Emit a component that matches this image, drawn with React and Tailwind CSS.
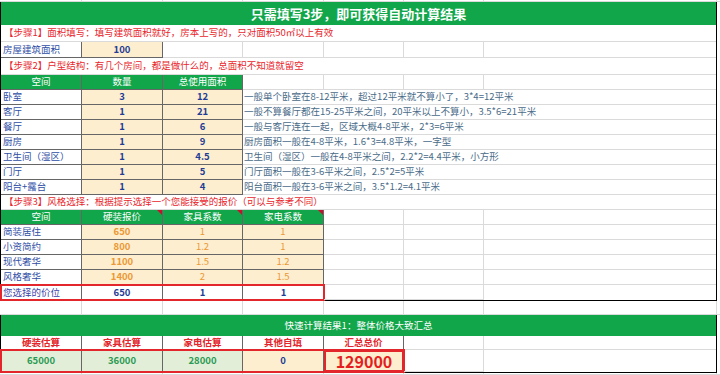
const FONT = { fontFamily: '"Noto Sans CJK SC", "Noto Sans", sans-serif' };

const GREEN = "bg-[#12a64b]";
const BEIGE = "bg-[#fdeecf]";

const rooms = [
  ["卧室", "3", "12", "一般单个卧室在8-12平米，超过12平米就不算小了，3*4=12平米"],
  ["客厅", "1", "21", "一般不算餐厅都在15-25平米之间，20平米以上不算小，3.5*6=21平米"],
  ["餐厅", "1", "6", "一般与客厅连在一起，区域大概4-8平米，2*3=6平米"],
  ["厨房", "1", "9", "厨房面积一般在4-8平米，1.6*3=4.8平米，一字型"],
  ["卫生间（湿区）", "1", "4.5", "卫生间（湿区）一般在4-8平米之间，2.2*2=4.4平米，小方形"],
  ["门厅", "1", "5", "门厅面积一般在3-6平米之间，2.5*2=5平米"],
  ["阳台+露台", "1", "4", "阳台面积一般在3-6平米之间，3.5*1.2=4.1平米"],
];

const styles = [
  ["简装居住", "650", "1", "1"],
  ["小资简约", "800", "1.2", "1"],
  ["现代奢华", "1100", "1.5", "1.2"],
  ["风格奢华", "1400", "2", "1.5"],
];

// dark bordered table cell
const Cell = ({ w, className = "", children }) => (
  <div
    className={`${w} h-full shrink-0 flex items-center border-r border-b border-[#666] ${className}`}
  >
    {children}
  </div>
);

// plain excel gridline cell
const Grid = ({ w }) => (
  <div className={`${w} h-full shrink-0 border-r border-b border-[#dadada]`} />
);

const Corner = () => (
  <span className="absolute top-0 right-0 w-0 h-0 border-t-[5px] border-l-[5px] border-t-[#c8102e] border-l-transparent" />
);

const OuterGrid = ({ h }) => (
  <div className={`flex ${h}`}>
    <Grid w="w-[82px]" />
    <Grid w="w-[81px]" />
    <Grid w="w-[80px]" />
    <Grid w="w-[81px]" />
    <Grid w="w-[80px]" />
    <Grid w="w-[80px]" />
    <Grid w="w-[233px]" />
    <div className="flex-1 border-b border-[#dadada]" />
  </div>
);

const StepRow = ({ children, h = "h-[17px]" }) => (
  <div className={`${h} flex items-center px-[3px] border-b border-[#dadada] text-[9.5px] leading-none text-[#e8262c]`}>
    {children}
  </div>
);

export default function App() {
  return (
    <div className="w-[720px] h-[375px] overflow-hidden bg-white" style={FONT}>
      <OuterGrid h="h-[2px]" />

      {/* main block */}
      <div className="w-[717px] border-l border-r border-b border-black">
        <div className={`h-[23px] ${GREEN} flex items-center justify-center text-white font-bold text-[13px] leading-none`}>
          只需填写3步，即可获得自动计算结果
        </div>

        <StepRow>【步骤1】面积填写：填写建筑面积就好，房本上写的，只对面积50㎡以上有效</StepRow>

        <div className="flex h-[16px] text-[9.5px] leading-none">
          <Cell w="w-[81px]" className="px-[2px] text-[#2f4ea6]">房屋建筑面积</Cell>
          <Cell w="w-[81px]" className={`${BEIGE} justify-center font-bold text-[#1f3d96]`}>100</Cell>
          <Grid w="w-[80px]" />
          <Grid w="w-[81px]" />
          <Grid w="w-[80px]" />
          <Grid w="w-[80px]" />
          <div className="flex-1 border-b border-[#dadada]" />
        </div>

        <StepRow>【步骤2】户型结构：有几个房间，都是做什么的，总面积不知道就留空</StepRow>

        <div className="flex h-[15px] text-[9.5px] leading-none">
          <Cell w="w-[81px]" className={`${GREEN} justify-center text-white`}>空间</Cell>
          <Cell w="w-[81px]" className={`${GREEN} justify-center text-white`}>数量</Cell>
          <Cell w="w-[80px]" className={`${GREEN} justify-center text-white`}>总使用面积</Cell>
          <Grid w="w-[81px]" />
          <Grid w="w-[80px]" />
          <Grid w="w-[80px]" />
          <div className="flex-1 border-b border-[#dadada]" />
        </div>

        {rooms.map(([name, qty, area, tip]) => (
          <div key={name} className="flex h-[15px] text-[9.5px] leading-none">
            <Cell w="w-[81px]" className="px-[2px] text-[#2f4ea6]">{name}</Cell>
            <Cell w="w-[81px]" className={`${BEIGE} justify-center font-bold text-[#1f3d96]`}>{qty}</Cell>
            <Cell w="w-[80px]" className={`${BEIGE} justify-center font-bold text-[#1f3d96]`}>{area}</Cell>
            <div className="flex-1 flex items-center px-[1px] border-b border-[#dadada] text-[#4a6b88] whitespace-nowrap">
              {tip}
            </div>
          </div>
        ))}

        <StepRow h="h-[15px]">【步骤3】风格选择：根据提示选择一个您能接受的报价（可以与参考不同）</StepRow>

        <div className="flex h-[15px] text-[9.5px] leading-none">
          <Cell w="w-[81px]" className={`${GREEN} justify-center text-white`}>空间</Cell>
          <Cell w="w-[81px]" className={`${GREEN} justify-center text-white relative`}>
            硬装报价
            <Corner />
          </Cell>
          <Cell w="w-[80px]" className={`${GREEN} justify-center text-white relative`}>
            家具系数
            <Corner />
          </Cell>
          <Cell w="w-[81px]" className={`${GREEN} justify-center text-white relative`}>
            家电系数
            <Corner />
          </Cell>
          <Grid w="w-[80px]" />
          <Grid w="w-[80px]" />
          <div className="flex-1 border-b border-[#dadada]" />
        </div>

        {styles.map(([name, price, furn, elec]) => (
          <div key={name} className="flex h-[15px] text-[9.5px] leading-none">
            <Cell w="w-[81px]" className="px-[2px] text-[#2f4ea6]">{name}</Cell>
            <Cell w="w-[81px]" className={`${BEIGE} justify-center font-semibold text-[#ec9834]`}>{price}</Cell>
            <Cell w="w-[80px]" className={`${BEIGE} justify-center text-[#ec9834]`}>{furn}</Cell>
            <Cell w="w-[81px]" className={`${BEIGE} justify-center text-[#ec9834]`}>{elec}</Cell>
            <Grid w="w-[80px]" />
            <Grid w="w-[80px]" />
            <div className="flex-1 border-b border-[#dadada]" />
          </div>
        ))}

        <div className="flex h-[15px] text-[9.5px] leading-none">
          <div className="flex h-full outline-2 outline-[#e3262c] -outline-offset-1">
            <Cell w="w-[81px]" className="px-[2px] text-[#3b3fa8] border-b-0">您选择的价位</Cell>
            <Cell w="w-[81px]" className="justify-center font-bold text-[#1f3d96] border-b-0">650</Cell>
            <Cell w="w-[80px]" className="justify-center font-bold text-[#1f3d96] border-b-0">1</Cell>
            <Cell w="w-[81px]" className="justify-center font-bold text-[#1f3d96] border-b-0 border-r-0">1</Cell>
          </div>
          <Grid w="w-[80px]" />
          <Grid w="w-[80px]" />
          <div className="flex-1" />
        </div>
      </div>

      <OuterGrid h="h-[14px]" />

      {/* summary block */}
      <div className="w-[717px] border-l border-r border-b border-black">
        <div className={`h-[21px] ${GREEN} flex items-center justify-center text-white text-[9.5px] leading-none`}>
          快速计算结果1：整体价格大致汇总
        </div>
        <div className="flex h-[14px] text-[9.5px] leading-none font-bold text-[#e3262c]">
          <Cell w="w-[81px]" className="justify-center">硬装估算</Cell>
          <Cell w="w-[81px]" className="justify-center">家具估算</Cell>
          <Cell w="w-[80px]" className="justify-center">家电估算</Cell>
          <Cell w="w-[81px]" className="justify-center">其他自填</Cell>
          <Cell w="w-[80px]" className="justify-center">汇总总价</Cell>
          <Grid w="w-[80px]" />
          <div className="flex-1 border-b border-[#dadada]" />
        </div>
        <div className="flex h-[22px] leading-none">
          <div className="flex h-full outline-2 outline-[#e3262c] -outline-offset-1 text-[9.5px] font-bold">
            <Cell w="w-[81px]" className="bg-[#e3eed9] justify-center text-[#2b9a54] border-b-0">65000</Cell>
            <Cell w="w-[81px]" className="bg-[#e3eed9] justify-center text-[#2b9a54] border-b-0">36000</Cell>
            <Cell w="w-[80px]" className="bg-[#e3eed9] justify-center text-[#2b9a54] border-b-0">28000</Cell>
            <Cell w="w-[81px]" className={`${BEIGE} justify-center text-[#1f3d96] border-b-0`}>0</Cell>
            <div className={`w-[80px] h-full shrink-0 flex items-center justify-center ${BEIGE} border-2 border-[#e3262c] text-[16px] text-[#e41e1e]`}>
              129000
            </div>
          </div>
          <Grid w="w-[80px]" />
          <div className="flex-1" />
        </div>
      </div>

      <OuterGrid h="h-[2px]" />
    </div>
  );
}
